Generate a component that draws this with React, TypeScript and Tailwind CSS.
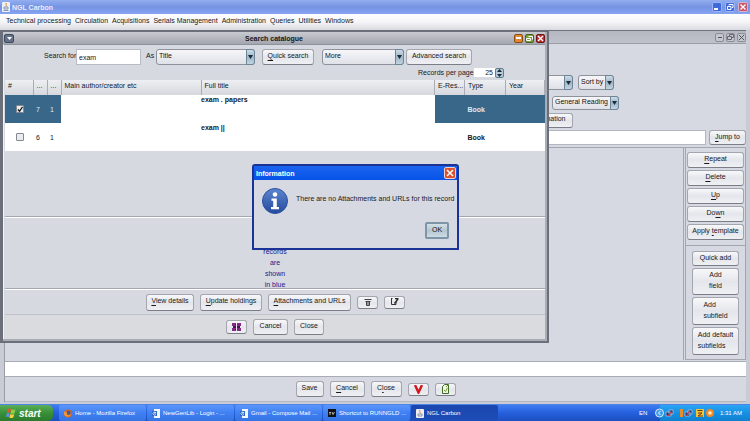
import React, { useState } from 'react';

type ButtonProps = {
  children: React.ReactNode;
  className?: string;
  label?: string;
  onClick?: () => void;
};

function Button({ children, className = '', label, onClick }: ButtonProps) {
  return (
    <button
      type="button"
      aria-label={label}
      onClick={onClick}
      className={`flex shrink-0 items-center justify-center rounded-[3px] border border-[#a3a6ae] border-b-[#7b7e87] bg-linear-to-b from-[#f8f8fa] via-[#e4e6eb] to-[#eff0f4] whitespace-nowrap ${
        label ? '' : 'pb-[3px]'
      } ${className}`}
    >
      {children}
    </button>
  );
}

// underlined shortcut letter
function Key({ children }: { children: string }) {
  return <span className="underline underline-offset-2">{children}</span>;
}

function Select({
  label,
  value,
  className = '',
}: {
  label: string;
  value: string;
  className?: string;
}) {
  return (
    <div className={`relative shrink-0 ${className}`}>
      <select
        aria-label={label}
        className="h-full w-full appearance-none rounded-[3px] border border-[#8e929c] bg-linear-to-b from-[#f6f6f9] to-[#dfe1e8] pb-[3px] pl-[2px] text-[#111]"
      >
        <option>{value}</option>
      </select>
      <span className="pointer-events-none absolute inset-y-0 right-0 flex w-[9px] items-center justify-center rounded-r-[3px] border border-[#6c8598] bg-linear-to-b from-[#cfdde8] via-[#9db5c6] to-[#c3d5e0]">
        <svg width="5" height="4" viewBox="0 0 5 4">
          <path d="M0 0h5L2.500 4z" fill="#1b2b38" />
        </svg>
      </span>
    </div>
  );
}

function TitleBar() {
  return (
    <header className="flex h-[14px] items-center bg-linear-to-b from-[#93aef0] via-[#7593e2] to-[#86a4f2] pr-[2px] pl-[2px]">
      <svg width="8" height="10" viewBox="0 0 8 10">
        <rect width="8" height="10" rx="1" fill="#eceff5" />
        <path d="M4.500 1c-2 1.500 1 2-.5 3.500" stroke="#e0832c" fill="none" />
        <path d="M2 5h4v2H2zM1.500 8.500h5" stroke="#6c82a6" fill="none" strokeWidth=".8" />
      </svg>
      <h1 className="ml-[2px] flex-1 font-bold text-[#e6edff]">NGL Carbon</h1>
      <div className="flex gap-[3px]">
        <button type="button" aria-label="Minimize" className="flex h-[10px] w-[10px] items-end rounded-[2px] border border-[#9db5f6] bg-[#4069da] p-[1px]">
          <span className="h-[2px] w-[4px] bg-white" />
        </button>
        <button type="button" aria-label="Restore" className="flex h-[10px] w-[10px] items-center justify-center rounded-[2px] border border-[#9db5f6] bg-[#4069da]">
          <svg width="8" height="8" viewBox="0 0 8 8" fill="none" stroke="#fff">
            <path d="M3 2.500V1.500h4v3H6M1.500 3.500h3.500v3H1.500z" />
          </svg>
        </button>
        <button type="button" aria-label="Close" className="flex h-[10px] w-[10px] items-center justify-center rounded-[2px] border border-[#d9b3cc] bg-[#c9576c]">
          <svg width="8" height="8" viewBox="0 0 8 8" stroke="#fff" strokeWidth="1.300">
            <path d="M1.500 1.500l5 5M6.500 1.500l-5 5" />
          </svg>
        </button>
      </div>
    </header>
  );
}

const menus = [
  'Technical processing',
  'Circulation',
  'Acquisitions',
  'Serials Management',
  'Administration',
  'Queries',
  'Utilities',
  'Windows',
];

function MenuBar() {
  return (
    <nav className="flex h-[16px] items-center gap-[4px] bg-linear-to-b from-white via-[#f5f5f7] to-[#d9dae0] px-[6px] pb-[3px]">
      {menus.map((m) => (
        <button type="button" key={m} className="whitespace-nowrap">
          {m}
        </button>
      ))}
    </nav>
  );
}

const books = [
  { no: 7, copies: 1, title: 'exam . papers', type: 'Book', checked: true },
  { no: 6, copies: 1, title: 'exam ||', type: 'Book', checked: false },
];

function ResultTable() {
  const [checked, setChecked] = useState(books.map((b) => b.checked));
  const head = 'border-r border-[#a9acb5] pl-[3px] text-left font-normal pb-[4px]';

  return (
    <table className="w-full table-fixed border-collapse">
      <colgroup>
        <col className="w-[28px]" />
        <col className="w-[14px]" />
        <col className="w-[14px]" />
        <col className="w-[140px]" />
        <col />
        <col className="w-[30px]" />
        <col className="w-[41px]" />
        <col className="w-[39px]" />
      </colgroup>
      <thead>
        <tr className="h-[15px] bg-linear-to-b from-[#eeeff2] to-[#d6d8de]">
          <th className={`${head} font-bold`}>#</th>
          <th className={head}>...</th>
          <th className={head}>...</th>
          <th className={head}>Main author/creator etc</th>
          <th className={head}>Full title</th>
          <th className={head}>E-Res...</th>
          <th className={head}>Type</th>
          <th className={head}>Year</th>
        </tr>
      </thead>
      <tbody>
        {books.map((b, i) => {
          const cell = b.checked ? 'bg-[#38678a] text-[#dfeaf2]' : 'bg-white';
          return (
            <tr key={b.no} className="h-[28px] bg-white">
              <td className={cell}>
                <label className="flex">
                  <input
                    type="checkbox"
                    aria-label={b.title}
                    checked={checked[i]}
                    onChange={() => setChecked(checked.map((c, j) => (j === i ? !c : c)))}
                    className="sr-only"
                  />
                  <span className="ml-[11px] flex h-[8px] w-[8px] items-center justify-center rounded-[1px] border border-[#84888f] bg-[#e9ebef]">
                    {checked[i] && (
                      <svg width="7" height="7" viewBox="0 0 7 7" fill="none" stroke="#111" strokeWidth="1.400">
                        <path d="M1 3.500l2 2L6.500.5" />
                      </svg>
                    )}
                  </span>
                </label>
              </td>
              <td className={`${cell} pl-[3px]`}>{b.no}</td>
              <td className={`${cell} pl-[3px]`}>{b.copies}</td>
              <td />
              <td className="align-top font-bold">{b.title}</td>
              <td className={cell} />
              <td className={`${cell} pl-[3px] font-bold`}>{b.type}</td>
              <td className={cell} />
            </tr>
          );
        })}
      </tbody>
    </table>
  );
}

function SearchWindow() {
  const [term, setTerm] = useState('exam');
  const winBtn = 'flex h-[9px] w-[9px] items-center justify-center rounded-[2px] border';

  return (
    <section className="absolute top-0 left-0 flex h-[313px] w-[549px] flex-col border-t-2 border-r-2 border-b-2 border-l-[3px] border-[#6b6f79] bg-[#a9adb6] pr-[2px] pb-[2px]">
      <div className="flex h-[12px] shrink-0 items-center bg-linear-to-b from-[#c9cbd1] to-[#a3a6ae] pl-[1px]">
        <button type="button" aria-label="Window menu" className="flex h-[9px] w-[10px] items-center justify-center rounded-[2px] border border-[#3f4a5c] bg-[#65718a]">
          <svg width="5" height="3" viewBox="0 0 5 3">
            <path d="M0 0h5L2.500 3z" fill="#fff" />
          </svg>
        </button>
        <h2 className="flex-1 pl-[20px] text-center font-bold">Search catalogue</h2>
        <div className="flex gap-[2px]">
          <button type="button" aria-label="Minimize" className={`${winBtn} border-[#8b4a12] bg-[#e28a2b]`}>
            <span className="h-[2px] w-[5px] bg-white" />
          </button>
          <button type="button" aria-label="Maximize" className={`${winBtn} border-[#4a611d] bg-[#7f9f3c]`}>
            <svg width="7" height="7" viewBox="0 0 7 7" fill="none" stroke="#fff">
              <path d="M2.500 1.500h4v3M.5 3.500h4v2h-4z" />
            </svg>
          </button>
          <button type="button" aria-label="Close" className={`${winBtn} border-[#6f1418] bg-[#b8302f]`}>
            <svg width="7" height="7" viewBox="0 0 7 7" stroke="#fff" strokeWidth="1.400">
              <path d="M1 1l5 5M6 1L1 6" />
            </svg>
          </button>
        </div>
      </div>

      <div className="flex flex-1 flex-col border-t border-l border-t-[#8e929b] border-l-[#f1f2f5] bg-[#d6d9e0] pl-[1px]">
        <form className="flex h-[20px] items-end pl-[39px]" onSubmit={(e) => e.preventDefault()}>
          <label htmlFor="term" className="w-[32px] pb-[5px] whitespace-nowrap">
            Search for
          </label>
          <input
            id="term"
            value={term}
            onChange={(e) => setTerm(e.target.value)}
            className="h-[16px] w-[65px] border border-[#b9bcc4] bg-white pl-[2px]"
          />
          <span className="w-[15px] pb-[5px] pl-[5px]">As</span>
          <Select label="As" value="Title" className="h-[16px] w-[99px]" />
          <Button className="ml-[7px] h-[16px] w-[52px]">
            <span>
              <Key>Q</Key>uick search
            </span>
          </Button>
          <Select label="More" value="More" className="ml-[8px] h-[16px] w-[82px]" />
          <Button className="ml-[2px] h-[16px] w-[66px]">Advanced search</Button>
        </form>

        <div className="flex h-[15px] items-center pl-[413px]">
          <label htmlFor="perPage" className="w-[56px] whitespace-nowrap">
            Records per page
          </label>
          <input id="perPage" defaultValue="25" className="h-[9px] w-[21px] bg-white pr-[2px] text-right" />
          <button type="button" aria-label="Change records per page" className="flex h-[10px] w-[9px] items-center justify-center rounded-[2px] border border-[#5f7d92] bg-[#b5c9d6]">
            <svg width="5" height="8" viewBox="0 0 5 8" fill="#1b2b38">
              <path d="M0 3l2.500-3L5 3zM0 5h5L2.500 8z" />
            </svg>
          </button>
        </div>

        <ResultTable />

        <div className="flex-1 border-b border-[#a3a6af]" />
        <div className="h-[72px] border-t border-b border-t-white border-b-[#a3a6af] pt-[28px] pl-[258px]">
          <p className="w-[24px] text-center leading-[11px] text-[#20208c]">
            records are shown <span className="whitespace-nowrap">in blue</span>
          </p>
        </div>
        <div className="flex h-[26px] items-center gap-[6px] border-t border-b border-t-white border-b-[#bfc2ca] pl-[141px]">
          <Button className="h-[17px] w-[48px]">
            <span>
              <Key>V</Key>iew details
            </span>
          </Button>
          <Button className="h-[17px] w-[62px]">
            <span>
              <Key>U</Key>pdate holdings
            </span>
          </Button>
          <Button className="h-[17px] w-[83px] border-[#555860]">
            <span>
              <Key>A</Key>ttachments and URLs
            </span>
          </Button>
          <Button label="Delete" className="h-[13px] w-[21px]">
            <svg width="8" height="8" viewBox="0 0 8 8" fill="none" stroke="#444">
              <path d="M.5 1.500h7M1.500 3.500h5" />
              <path d="M2.500 4v3.500h3V4M4 4v3" />
            </svg>
          </Button>
          <Button label="Edit" className="h-[13px] w-[21px]">
            <svg width="9" height="8" viewBox="0 0 9 8" fill="none" stroke="#333">
              <path d="M1.500 0v6.500H6V4M1 .5h1.500" />
              <path d="M8 1L4.500 5.500M5 .5h3.500" stroke="#222" strokeWidth="1.300" />
            </svg>
          </Button>
        </div>
        <div className="flex h-[24px] items-center gap-[6px] bg-[#d9dbdf] pl-[221px]">
          <Button label="Binding" className="h-[14px] w-[21px]">
            <svg width="9" height="8" viewBox="0 0 9 8">
              <path d="M0 0h4v3H0zM5 0h4v3H5zM0 5h4v3H0zM5 5h4v3H5z" fill="#862a86" />
              <path d="M1 3h3v2H1zM5 3h3v2H5zM3 1h1v1H3zM3 6h1v1H3z" fill="#4b1255" />
            </svg>
          </Button>
          <Button className="h-[16px] w-[35px]">
            <span>Cancel</span>
          </Button>
          <Button className="h-[16px] w-[30px]">
            <span>Close</span>
          </Button>
        </div>
      </div>
    </section>
  );
}

function InfoDialog({ onClose }: { onClose: () => void }) {
  return (
    <section
      role="dialog"
      aria-label="Information"
      className="absolute top-[134px] left-[252px] w-[207px] rounded-t-[3px] border-2 border-[#1b3396] bg-[#d6d9e2]"
    >
      <div className="flex h-[14px] items-center justify-between bg-linear-to-b from-[#1b63ee] to-[#0554e8] pr-[1px] pl-[2px]">
        <h2 className="font-bold text-white">Information</h2>
        <button type="button" aria-label="Close" onClick={onClose} className="flex h-[12px] w-[12px] items-center justify-center rounded-[2px] border border-[#f0d0c8] bg-[#d9512f]">
          <svg width="8" height="8" viewBox="0 0 8 8" stroke="#fff" strokeWidth="1.500">
            <path d="M1 1l6 6M7 1L1 7" />
          </svg>
        </button>
      </div>
      <div className="flex items-start pt-[8px] pl-[8px]">
        <svg width="26" height="26" viewBox="0 0 26 26" className="shrink-0">
          <defs>
            <linearGradient id="info" x1="0" y1="0" x2="0" y2="1">
              <stop offset="0" stopColor="#5d86cf" />
              <stop offset="1" stopColor="#234a9f" />
            </linearGradient>
          </defs>
          <circle cx="13" cy="13" r="12.500" fill="url(#info)" stroke="#2c509d" />
          <circle cx="13" cy="6.500" r="2.300" fill="#fff" />
          <path d="M9.500 10.500h5.300v8.500h2.200v2.200H9V19h2.200v-6.300H9.500z" fill="#fff" />
        </svg>
        <p className="pt-[6px] pl-[8px] whitespace-nowrap">
          There are no Attachments and URLs for this record
        </p>
      </div>
      <div className="flex justify-end pt-[8px] pr-[8px] pb-[9px]">
        <button
          type="button"
          onClick={onClose}
          className="flex h-[17px] w-[24px] items-center justify-center rounded-[2px] border-2 border-[#7d95a6] bg-linear-to-b from-[#d5e0e8] via-[#b5c6d2] to-[#cddbe4] pb-[2px]"
        >
          OK
        </button>
      </div>
    </section>
  );
}

function CatalogueWindow() {
  const side = 'h-[16px] w-full';
  const ctl = 'flex h-[9px] w-[9px] items-center justify-center rounded-[2px] border border-[#8a8d96] bg-[#c3c6ce]';

  return (
    <section className="flex flex-1 flex-col bg-[#c9ccd4] pr-[4px] pl-[4px]">
      <div className="flex h-[14px] items-center justify-end gap-[2px] border-t border-b border-t-[#70747d] border-b-[#9a9da6] bg-linear-to-b from-[#b4b7bf] to-[#bfc2ca]">
        <button type="button" aria-label="Minimize window" className={ctl}>
          <span className="h-[1px] w-[4px] bg-[#555]" />
        </button>
        <button type="button" aria-label="Restore window" className={ctl}>
          <svg width="7" height="7" viewBox="0 0 7 7" fill="none" stroke="#666">
            <path d="M2.500 2V.5h4v3H5M.5 2.500h4v3h-4z" />
          </svg>
        </button>
        <button type="button" aria-label="Close window" className={ctl}>
          <svg width="7" height="7" viewBox="0 0 7 7" stroke="#555">
            <path d="M1 1l5 5M6 1L1 6" />
          </svg>
        </button>
      </div>

      <div className="flex flex-1 flex-col border-l border-[#9a9da6] bg-[#d6d9e2]">
        <div className="flex h-[52px] items-end gap-[5px] pb-[6px] pl-[488px]">
          <Select label="Index" value="" className="h-[15px] w-[80px]" />
          <Select label="Sort by" value="Sort by" className="h-[15px] w-[36px]" />
        </div>
        <div className="flex h-[14px] items-center pl-[547px]">
          <Select label="Collection" value="General Reading" className="h-[14px] w-[67px]" />
        </div>
        <div className="flex h-[20px] items-center pl-[518px]">
          <Button className="h-[15px] w-[50px]">Information</Button>
        </div>
        <div className="flex gap-[3px]">
          <input aria-label="Field" className="h-[15px] min-w-0 flex-1 border border-[#b4b7c0] bg-white" />
          <Button className="h-[15px] w-[37px]">
            <span>
              <Key>J</Key>ump to
            </span>
          </Button>
        </div>

        <div className="mt-[2px] flex flex-1 border-t border-[#a3a6af]">
          <div className="flex-1 border-r border-[#a3a6af]" />
          <aside className="ml-[1px] w-[61px] border border-t-0 border-[#a3a6af]">
            <div className="flex flex-col gap-[2px] border-b border-[#a3a6af] px-[1px] pt-[4px] pb-[5px]">
              <Button className={side}>
                <span>
                  <Key>R</Key>epeat
                </span>
              </Button>
              <Button className={side}>
                <span>
                  <Key>D</Key>elete
                </span>
              </Button>
              <Button className={side}>
                <span>
                  <Key>U</Key>p
                </span>
              </Button>
              <Button className={side}>
                <span>
                  Do<Key>w</Key>n
                </span>
              </Button>
              <Button className={side}>
                <span>
                  Apply <Key>t</Key>emplate
                </span>
              </Button>
            </div>
            <div className="flex flex-col gap-[2px] px-[6px] pt-[5px] pb-[4px] leading-[11px]">
              <Button className="h-[15px]">Quick add</Button>
              <Button className="h-[27px]">
                <span>
                  Add
                  <br />
                  field
                </span>
              </Button>
              <Button className="h-[28px]">
                <span className="text-left">
                  Add
                  <br />
                  subfield
                </span>
              </Button>
              <Button className="h-[28px]">
                <span className="text-left">
                  Add default
                  <br />
                  subfields
                </span>
              </Button>
            </div>
          </aside>
        </div>

        <input aria-label="Status" className="mt-[1px] h-[16px] w-full border-t border-b border-[#a9acb5] bg-white" />
        <div className="flex h-[25px] items-center justify-center gap-[6px] border-b border-[#b4b7c0]">
          <Button className="h-[16px] w-[28px]">Save</Button>
          <Button className="h-[16px] w-[35px]">
            <span>
              <Key>C</Key>ancel
            </span>
          </Button>
          <Button className="h-[16px] w-[31px]">
            <span>
              C<Key>l</Key>ose
            </span>
          </Button>
          <Button label="Validate" className="h-[13px] w-[21px]">
            <svg width="9" height="9" viewBox="0 0 9 9" fill="none" stroke="#d3161c" strokeWidth="2.400">
              <path d="M1 0l3.500 7.500L8 0" />
            </svg>
          </Button>
          <Button label="Worksheet" className="h-[13px] w-[21px]">
            <svg width="9" height="10" viewBox="0 0 9 10" fill="none" stroke="#3f6b2a">
              <path d="M1.500 2.500l2-2h4v9h-6z" fill="#eef6e0" />
              <path d="M3 6l1.500 1.500L6.500 4M5 3l2-2" stroke="#6f9c22" />
            </svg>
          </Button>
        </div>
      </div>
      <div className="h-[2px]" />
    </section>
  );
}

function PageIcon() {
  return (
    <svg width="8" height="9" viewBox="0 0 8 9" className="shrink-0">
      <path d="M2 0h6v9H2z" fill="#f3f6fc" />
      <path d="M0 2h5v5H0z" fill="#2a67c9" />
      <path d="M3.800 5.500a1.500 1.500 0 1 1 .2-1.500H2" stroke="#fff" fill="none" strokeWidth=".8" />
    </svg>
  );
}

function FirefoxIcon() {
  return (
    <svg width="8" height="9" viewBox="0 0 8 9" className="shrink-0">
      <circle cx="4" cy="4.500" r="4" fill="#d9601c" />
      <circle cx="4.500" cy="3.800" r="2" fill="#3b5ca8" />
      <path d="M0 3c2-1 3 0 3 2s3 1.500 4.500 0C7 8 1 9 0 5z" fill="#f0973a" />
    </svg>
  );
}

function ConsoleIcon() {
  return (
    <svg width="8" height="8" viewBox="0 0 8 8" className="shrink-0">
      <path d="M0 0h8v8H0z" fill="#111" />
      <path d="M1 3.500h2M1 5h2M4 3l1 2.500L6.500 3" stroke="#ddd" fill="none" strokeWidth=".8" />
    </svg>
  );
}

function JavaIcon() {
  return (
    <svg width="8" height="9" viewBox="0 0 8 9" className="shrink-0">
      <rect width="8" height="9" rx="1" fill="#eee" />
      <path d="M4 1c-1.500 1.500 1 2 0 3.500" stroke="#e0832c" fill="none" />
      <path d="M2 5h4v2H2z" stroke="#6c82a6" fill="none" strokeWidth=".8" />
    </svg>
  );
}

const tasks = [
  { text: 'Home - Mozilla Firefox', icon: <FirefoxIcon /> },
  { text: 'NewGenLib - Login - ...', icon: <PageIcon /> },
  { text: 'Gmail - Compose Mail ...', icon: <PageIcon /> },
  { text: 'Shortcut to RUNNGLD ...', icon: <ConsoleIcon /> },
  { text: 'NGL Carbon', icon: <JavaIcon />, active: true },
];

function Taskbar() {
  return (
    <footer className="flex h-[17px] items-stretch border-t border-[#4e83e8] bg-linear-to-b from-[#3f7cf0] via-[#2560dc] to-[#1c4fc0] text-white">
      <button
        type="button"
        className="mr-[6px] flex w-[53px] items-center gap-[3px] rounded-r-[5px] bg-linear-to-b from-[#5cae58] via-[#389039] to-[#2c7a2e] pl-[6px] text-[10px] font-bold italic"
      >
        <svg width="10" height="10" viewBox="0 0 10 10">
          <path d="M2 1q1.500-1 3 0L4 5Q2.500 4 1 5z" fill="#e8532b" />
          <path d="M5.500 1.300q2 1 4 0l-1 4q-2 1-4 0z" fill="#8fd047" />
          <path d="M.8 5.500q1.500-1 3 0L3 9Q1.500 8 0 9z" fill="#5c93f0" />
          <path d="M4.300 5.900q2 1 4 0l-1 3.500q-2 1-4 0z" fill="#f8cf3b" />
        </svg>
        start
      </button>
      <div className="flex flex-1 gap-[1px] text-[6px]">
        {tasks.map((t) => (
          <button
            type="button"
            key={t.text}
            className={`flex w-[87px] items-center gap-[3px] rounded-[2px] pl-[5px] whitespace-nowrap ${
              t.active
                ? 'bg-linear-to-b from-[#1a46ae] to-[#1e4eb8]'
                : 'bg-linear-to-b from-[#5c96fb] via-[#3f80f2] to-[#3474e4]'
            }`}
          >
            {t.icon}
            {t.text}
          </button>
        ))}
      </div>
      <span className="flex w-[21px] items-center text-[6px]">EN</span>
      <div className="flex w-[90px] items-center bg-linear-to-b from-[#2ba4f4] via-[#1590e4] to-[#1180cf] pr-[8px]">
        <svg width="62" height="10" viewBox="0 0 62 10" className="-ml-[5px] shrink-0">
          <circle cx="4.500" cy="5" r="4" fill="#3f9bea" stroke="#d5ecff" />
          <path d="M5.500 3L3.500 5l2 2" stroke="#fff" fill="none" />
          <path d="M11 4h5v4h-5zM14 2h4v4h-4z" fill="#26386e" stroke="#b9cbe8" strokeWidth=".7" />
          <path d="M13 8l3-4" stroke="#d33" />
          <path d="M25 1h3v8h-3z" fill="#e58e2c" />
          <path d="M30 4h5v4h-5zM33 2h4v4h-4z" fill="#26386e" stroke="#b9cbe8" strokeWidth=".7" />
          <path d="M31 8l3-4" stroke="#d33" />
          <path d="M41 1h8v8h-8z" fill="#f3c33c" />
          <path d="M42.500 2.500h5M43 5h4l-4 3h5" stroke="#6b3b10" fill="none" />
          <circle cx="55" cy="5" r="4" fill="#f08a24" />
          <circle cx="55" cy="5" r="1.800" fill="#fde9c8" />
        </svg>
        <time className="ml-[3px] text-[6px] whitespace-nowrap">1:31 AM</time>
      </div>
    </footer>
  );
}

function App() {
  const [dialogOpen, setDialogOpen] = useState(true);

  return (
    <div className="flex min-h-screen flex-col bg-[#c9ccd4] font-['Liberation_Sans',Arial,sans-serif] text-[7px] leading-[9px] text-[#16181c]">
      <TitleBar />
      <MenuBar />
      <main className="relative flex flex-1 flex-col">
        <CatalogueWindow />
        <SearchWindow />
        {dialogOpen && <InfoDialog onClose={() => setDialogOpen(false)} />}
      </main>
      <Taskbar />
    </div>
  );
}

export default App;
